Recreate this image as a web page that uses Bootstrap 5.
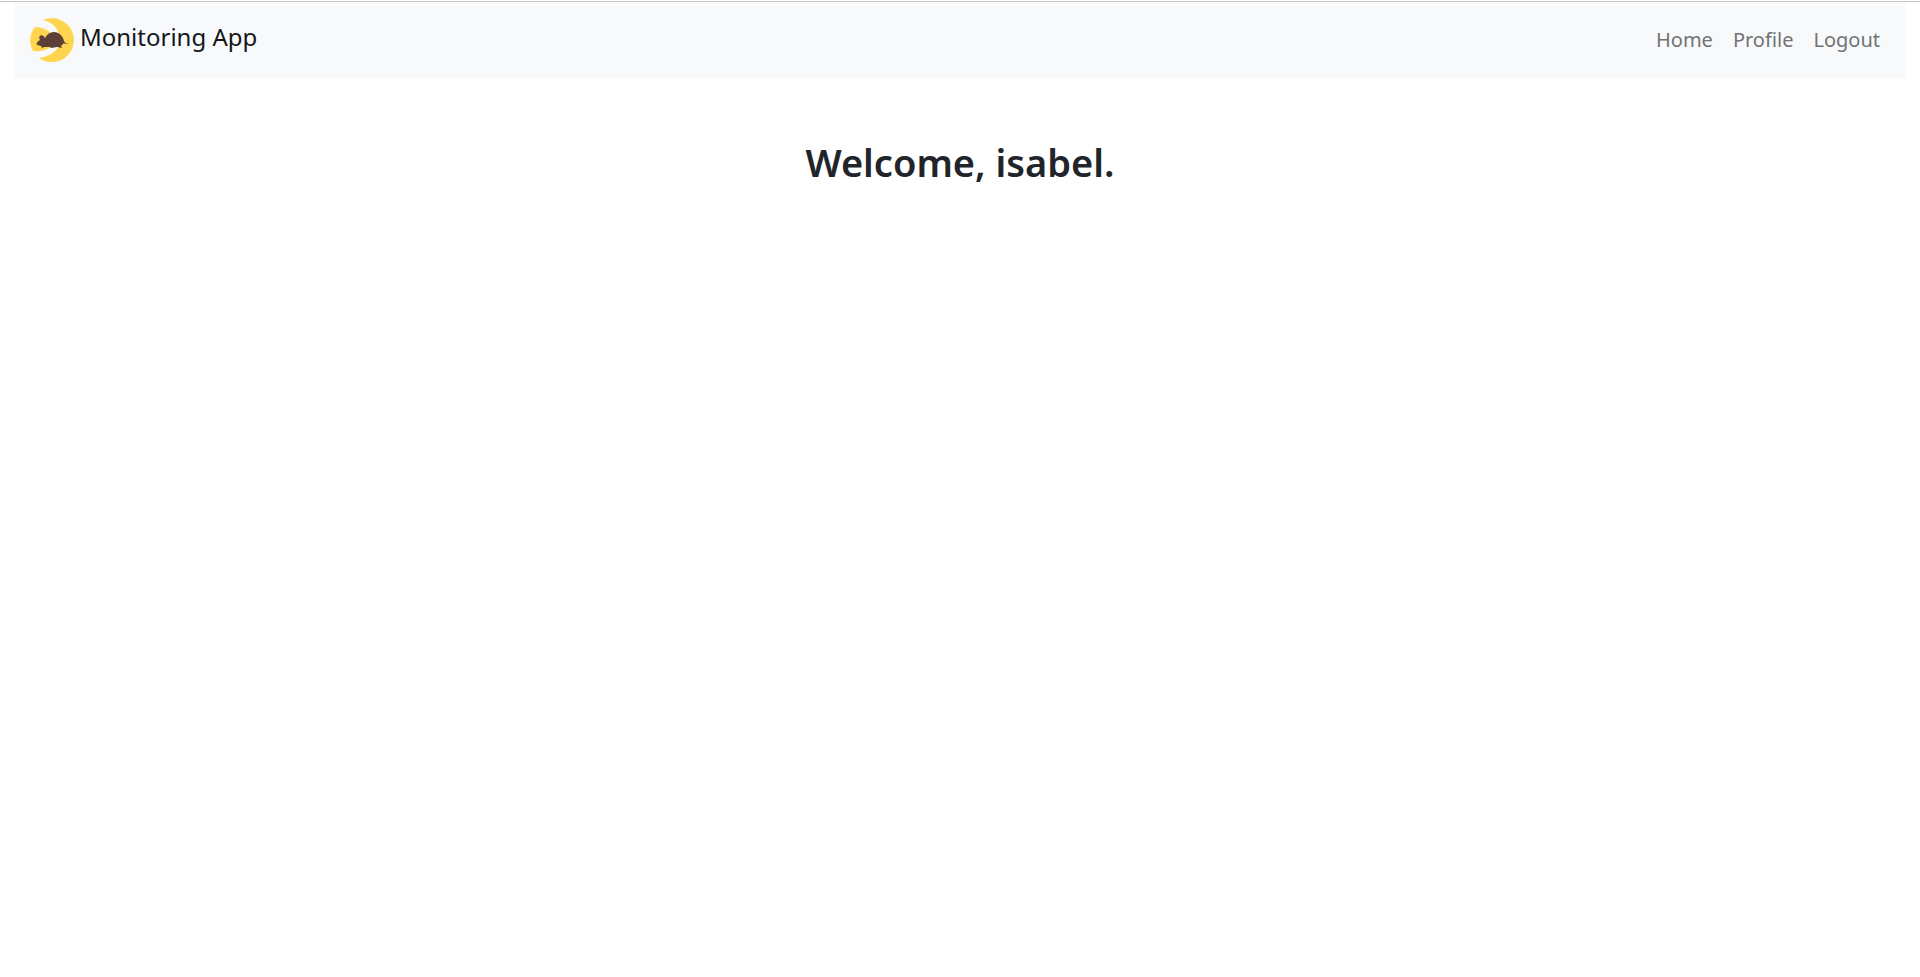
<!DOCTYPE html>
<html lang="en">
<head>
<meta charset="utf-8">
<meta name="viewport" content="width=device-width, initial-scale=1">
<title>Monitoring App</title>
<link href="https://cdn.jsdelivr.net/npm/bootstrap@5.3.0/dist/css/bootstrap.min.css" rel="stylesheet">
<style>
body { font-family: "Noto Sans", "Open Sans", sans-serif; font-size: 20px; border-top: 1px solid #c6c6c6; margin-top: 1px; }
.page-shell { padding: 0 15px; }
.app-bar { padding: 16px 0; }
.app-bar .bar-inner { padding: 0 15px; }
.app-bar .navbar-brand { font-size: 24px; line-height: 38px; padding: 0; gap: 6px; color: #141619; }
.app-bar .navbar-nav .nav-link { padding: 0 10px; color: #717375; line-height: 30px; }
.brand-logo { width: 44px; height: 44px; }
.welcome { font-size: 38px; line-height: 48px; font-weight: 600; margin-top: 60px; }
</style>
</head>
<body>
<div class="container-fluid page-shell">
  <nav class="navbar navbar-expand navbar-light bg-light app-bar">
    <div class="container-fluid bar-inner">
      <a class="navbar-brand d-flex" href="#">
        <svg class="brand-logo" viewBox="0 0 44 44" aria-hidden="true">
          <path fill="#ffd54f" d="M13 2A22 22 0 1 1 9 40C17 39 25 35 29 28C33 17 25 4 13 2Z"/>
          <path fill="#ffd54f" d="M5 9C11 9 16 11 20 14L21 29C16 32 11 34 3 33C-1 25-1 17 5 9Z"/>
          <path fill="#5d4037" d="M7 27C6 25 8 23 10 22C8 18 11 16 13 18C15 18 14 20 15 20C17 16 20 14 24 14C29 14 33 18 34 23C35 25 36 26 38 25L37 26C35 26 34 25 33 26L31 28L32 30L27 29L21 30L20 29L14 29L12 30L11 28Z"/>
        </svg>
        Monitoring App
      </a>
      <ul class="navbar-nav ms-auto">
        <li class="nav-item"><a class="nav-link" href="#">Home</a></li>
        <li class="nav-item"><a class="nav-link" href="#">Profile</a></li>
        <li class="nav-item"><a class="nav-link" href="#">Logout</a></li>
      </ul>
    </div>
  </nav>
  <main>
    <h1 class="text-center welcome">Welcome, isabel.</h1>
  </main>
</div>
<script src="https://cdn.jsdelivr.net/npm/bootstrap@5.3.0/dist/js/bootstrap.bundle.min.js"></script>
</body>
</html>
